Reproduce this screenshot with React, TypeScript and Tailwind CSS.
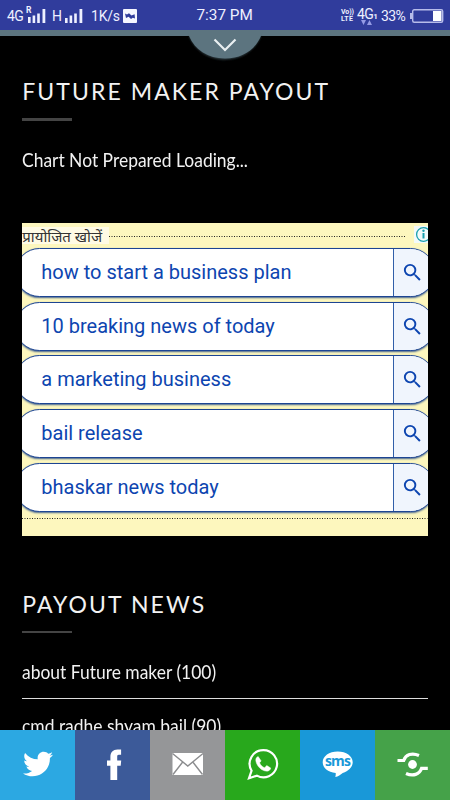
import React from "react";

const searches = [
  "how to start a business plan",
  "10 breaking news of today",
  "a marketing business",
  "bail release",
  "bhaskar news today",
];

function SignalBars({ roaming = false }: { roaming?: boolean }) {
  return (
    <svg width="20" height="18" viewBox="0 0 20 18" fill="#eef0ff">
      <rect x="1" y={roaming ? 11 : 12} width="2.6" height={roaming ? 6 : 5} />
      <rect x="5.600" y="9.500" width="2.600" height="7.500" />
      <rect x="10.200" y="7.500" width="2.600" height="9.500" />
      <rect x="15.500" y="3" width="2.800" height="14" />
    </svg>
  );
}

function StatusBar() {
  return (
    <header className="relative flex h-[30px] shrink-0 items-center bg-[#303c9c] pl-[7px] pt-px font-[Roboto,sans-serif] text-[14px] leading-none text-[#eef0ff]">
      <span className="w-[20px] whitespace-nowrap text-[14px] tracking-[-0.6px]">4G</span>
      <span className="relative -top-[1px] flex w-[25px]">
        <SignalBars roaming />
        <span className="absolute -top-[1px] left-[-1px] text-[8.500px] font-bold leading-[10px]">R</span>
      </span>
      <span className="w-[12px] text-[14px]">H</span>
      <span className="relative -top-[1px] flex w-[27px]"><SignalBars /></span>
      <span className="w-[32px] whitespace-nowrap text-[14px] tracking-[-0.2px]">1K/s</span>
      <svg width="14" height="14" viewBox="0 0 14 14">
        <rect width="14" height="14" rx="1" fill="#f5f6ff" />
        <path d="M2 4.500 4 5.500 6 4.300 8.500 6.600 11.600 5.200 12 9.500 9.800 8.700 8 10 5.600 7.800 3 9z" fill="#303c9c" />
      </svg>
      <span className="ml-[59.500px] w-[144.500px] whitespace-nowrap text-[15.300px]">7:37 PM</span>
      <span className="w-[16px] text-[7px] font-bold leading-[7px]">
        <span className="block whitespace-nowrap tracking-[-0.1px]">Vo))</span>
        <span className="block tracking-[0.3px]">LTE</span>
      </span>
      <span className="relative -top-[2px] w-[24px] whitespace-nowrap text-[14px] tracking-[-0.600px]">
        4G<span className="text-[8px] font-bold">1</span>
        <svg className="absolute left-[4px] top-[13px]" width="12" height="5" viewBox="0 0 12 5" fill="#959be5">
          <path d="M0 0h5L2.500 5zM6 5h5L8.500 0z" />
        </svg>
      </span>
      <span className="w-[28px] text-[14px] tracking-[-0.600px]">33%</span>
      <svg className="ml-[1px]" width="34" height="14" viewBox="0 0 34 14">
        <rect x="0" y="4" width="2" height="6" fill="#b7bcea" />
        <rect x="2.700" y="0.700" width="30" height="12.600" rx="1.500" fill="none" stroke="#b7bcea" strokeWidth="1.400" />
        <rect x="23" y="2" width="8.500" height="10" fill="#fff" />
      </svg>
    </header>
  );
}

function PullTab() {
  return (
    <div className="relative h-[6px] shrink-0 bg-[#5c747f]">
      <svg className="absolute left-[181px] top-0" width="88" height="34" viewBox="0 0 88 34">
        <defs>
          <filter id="soft" x="-20%" y="-20%" width="140%" height="150%"><feGaussianBlur stdDeviation="1" /></filter>
        </defs>
        <path d="M8 6C14 20 27 29.500 44 29.500S74 20 80 6z" fill="#34444b" filter="url(#soft)" />
        <path d="M6 0 8 6C14 20 27 28.500 44 28.500S74 20 80 6L82 0z" fill="#5c747f" />
        <path d="M33.500 9.500 44 20 54.500 9.500" fill="none" stroke="#e9eff1" strokeWidth="2.200" />
      </svg>
    </div>
  );
}

function Heading({ children }: { children: React.ReactNode }) {
  return (
    <>
      <h2 className="h-[30px] whitespace-nowrap text-[23px] leading-[30px] tracking-[2.060px]">{children}</h2>
      <div className="mt-[12px] h-[2.500px] w-[50px] bg-[#444]" />
    </>
  );
}

function Condensed({ children }: { children: React.ReactNode }) {
  return <span className="inline-block origin-left scale-x-[0.918] whitespace-nowrap">{children}</span>;
}

function SearchRow({ label }: { label: string }) {
  return (
    <a className="-mx-[7px] mb-[4.700px] flex h-[49px] overflow-hidden rounded-full border border-[#1c4593] bg-white text-[#0d45b0] shadow-[0_1px_2px_#3f5f90]">
      <span className="flex-1 pl-[25px] text-[20px] leading-[47px]">{label}</span>
      <span className="flex w-[41px] items-center border-l border-[#315fa9] bg-[#f0f5fd] pl-[7px]">
        <svg width="23" height="23" viewBox="0 0 24 24" fill="currentColor">
          <path d="M15.500 14h-.79l-.28-.27A6.471 6.471 0 0 0 16 9.500 6.500 6.500 0 1 0 9.500 16c1.610 0 3.090-.59 4.230-1.570l.27.28v.79l5 4.990L20.490 19l-4.990-5zm-6 0C7.010 14 5 11.990 5 9.500S7.010 5 9.500 5 14 7.010 14 9.500 11.990 14 9.500 14z" />
        </svg>
      </span>
    </a>
  );
}

function Dots() {
  return (
    <svg className="block w-full" height="1" fill="none">
      <line x1="0" x2="100%" y1="0.5" y2="0.5" stroke="#222" strokeWidth="1" strokeDasharray="1 1.500" />
    </svg>
  );
}

function SponsoredSearches() {
  return (
    <section className="mt-[50px] h-[312.500px] w-[405.500px] overflow-hidden bg-[#fdf7be] font-[Roboto,sans-serif]">
      <div className="flex h-[25px] items-center">
        <span className="h-[17px] w-[87px] shrink-0 whitespace-nowrap bg-[#fffbe5] font-['Noto_Sans',sans-serif] text-[15px] leading-[19px] text-[#333]">
          प्रायोजित खोजें
        </span>
        <span className="mt-[2px] w-[297px] shrink-0"><Dots /></span>
        <svg className="mb-[3px] ml-[8px] shrink-0" width="19" height="17" viewBox="0 0 19 17">
          <rect x="0" width="19" height="17" fill="#f3fafa" />
          <circle cx="9.500" cy="8.500" r="6.900" fill="none" stroke="#1aa0ad" strokeWidth="1.300" />
          <rect x="8.500" y="7" width="2" height="5.500" fill="#1aa0ad" />
          <circle cx="9.500" cy="4.800" r="1.200" fill="#1aa0ad" />
        </svg>
      </div>
      {searches.map((s) => <SearchRow key={s} label={s} />)}
      <div className="pt-[1.500px]"><Dots /></div>
    </section>
  );
}

function ShareBar() {
  const tile = "flex h-[70px] w-[75px] shrink-0 items-center justify-center pb-[3px]";
  return (
    <nav className="flex h-[70px] shrink-0">
      <a className={`${tile} bg-[#2ca8e2]`}>
        <svg width="40" height="40" viewBox="0 0 40 40" fill="#fff">
          <path d="m31.500 11.700c1.300-.8 2.200-2 2.700-3.400-1.400.7-2.700 1.200-4 1.400-1.100-1.200-2.600-1.900-4.400-1.900-1.700 0-3.200.6-4.400 1.800-1.200 1.200-1.800 2.700-1.800 4.400 0 .5.1.9.2 1.300-5.100-.1-9.400-2.300-12.700-6.400-.6 1-.9 2.100-.9 3.100 0 2.200 1 3.900 2.800 5.200-1.100-.1-2-.4-2.800-.8 0 1.500.5 2.800 1.400 4 .9 1.100 2.100 1.800 3.500 2.100-.5.1-1 .2-1.600.2-.5 0-.9 0-1.100-.1.4 1.200 1.100 2.300 2.100 3 1.100.8 2.300 1.200 3.600 1.300-2.200 1.700-4.700 2.600-7.600 2.600-.7 0-1.200 0-1.500-.1 2.800 1.900 6 2.800 9.500 2.800 3.500 0 6.700-.9 9.400-2.700 2.800-1.800 4.800-4.100 6.100-6.700 1.300-2.600 1.900-5.300 1.900-8.100v-.8c1.300-.9 2.300-2 3.100-3.200-1.100.5-2.300.8-3.500 1z" />
        </svg>
      </a>
      <a className={`${tile} bg-[#3c5a99]`}>
        <svg width="40" height="40" viewBox="0 0 40 40" fill="#fff">
          <path d="M24.200 36H17.400V21.800H14v-5.300h3.400v-3.700C17.400 8.400 20 5.500 24.500 5.500h3.600v5.200h-2.300c-1.400 0-1.600.7-1.600 2v3.800h4l-.5 5.300h-3.500z" />
        </svg>
      </a>
      <a className={`${tile} bg-[#959698]`}>
        <svg width="40" height="40" viewBox="0 0 40 40">
          <rect x="4.500" y="9" width="30.500" height="22" fill="#fff" />
          <path d="M4.500 9.500 19.800 22 35 9.500M5 30.500 14.500 18.200M34.500 30.500 25 18.200" fill="none" stroke="#8b8c8e" strokeWidth="1.400" />
        </svg>
      </a>
      <a className={`${tile} bg-[#28a81c]`}>
        <svg width="40" height="40" viewBox="0 0 40 40">
          <path d="M20.400 6.100a13.600 13.600 0 1 1-6.500 25.500L6 34.200 8.600 26.700A13.600 13.600 0 0 1 20.400 6.100z" fill="none" stroke="#fff" strokeWidth="2.200" />
          <path d="M15.200 12.600c-1.700.4-2.700 2.200-2.300 4.300 1 5.300 5.200 9.500 10.200 10.200 2.400.3 4.400-1 4.600-3.100l-4-2.400-2 2.200c-2.400-.8-4.200-2.600-5.100-5l1.500-1.900z" fill="#fff" stroke="#fff" strokeWidth=".5" strokeLinejoin="round" />
        </svg>
      </a>
      <a className={`${tile} bg-[#1998d8]`}>
        <span className="relative flex h-[40px] w-[40px] justify-center">
          <svg className="absolute left-0 top-0" width="40" height="40" viewBox="0 0 40 40">
            <path d="M19.700 7.600c8.500 0 15 4.600 15 10.700 0 4.900-4.300 9-10 10.600-2.200 2-4.500 3.300-7.400 4.100.4-1.400.5-2.700.4-4C10 28.300 4.700 23.900 4.700 18.300 4.700 12.200 11.200 7.600 19.700 7.600z" fill="#fff" />
          </svg>
          <span className="relative pt-[8px] font-['Open_Sans',sans-serif] text-[14px] font-bold leading-[17px] tracking-[-0.900px] text-[#1998d8]">sms</span>
        </span>
      </a>
      <a className={`${tile} bg-[#45a249]`}>
        <svg width="40" height="40" viewBox="0 0 40 40">
          <circle cx="19.500" cy="20.500" r="4.400" fill="#fff" />
          <path d="M4.500 16.500h6.200C12.700 10.500 19 8.400 26 11.500M34.800 24.300h-6.200C26.600 30.500 20 32.600 13 29.500" fill="none" stroke="#fff" strokeWidth="3.200" />
        </svg>
      </a>
    </nav>
  );
}

export default function App() {
  return (
    <div className="flex h-[800px] w-[450px] flex-col overflow-hidden bg-black">
      <StatusBar />
      <PullTab />
      <main className="h-[694px] overflow-hidden px-[22.300px] pt-[40px] font-[Lato,sans-serif] text-[#f2f2f2]">
        <Heading>FUTURE MAKER PAYOUT</Heading>
        <p className="mt-[26px] h-[26.500px] text-[19px] leading-[26px]"><Condensed>Chart Not Prepared Loading...</Condensed></p>
        <SponsoredSearches />
        <div className="mt-[53px]"><Heading>PAYOUT NEWS</Heading></div>
        <ul className="mt-[13px] text-[19px]">
          <li className="h-[53px] border-b-[1.500px] border-[#ddd] pt-[13px] leading-[26px]"><Condensed>about Future maker (100)</Condensed></li>
          <li className="pt-[13.500px] leading-[26px]"><Condensed>cmd radhe shyam bail (90)</Condensed></li>
        </ul>
      </main>
      <ShareBar />
    </div>
  );
}
